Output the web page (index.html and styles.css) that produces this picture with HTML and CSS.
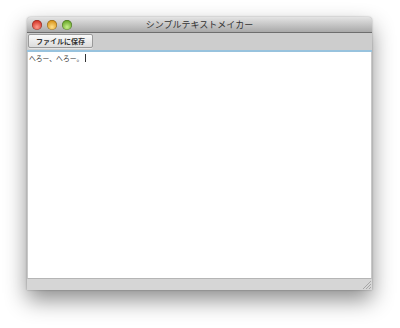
FILE: index.html
```html
<!DOCTYPE html>
<html lang="ja">
<head>
<meta charset="utf-8">
<title>シンプルテキストメイカー</title>
<link rel="stylesheet" href="styles.css">
</head>
<body>
<div class="window">
  <div class="titlebar">
    <div class="lights">
      <span class="light red"></span>
      <span class="light yellow"></span>
      <span class="light green"></span>
    </div>
    <div class="title">シンプルテキストメイカー</div>
  </div>
  <div class="toolbar">
    <button class="btn">ファイルに保存</button>
  </div>
  <div class="content">
    <div class="text">へろー、へろー。<span class="caret"></span></div>
  </div>
  <div class="statusbar">
    <svg class="grip" width="9" height="9" viewBox="0 0 9 9">
      <line x1="9" y1="1" x2="1" y2="9" stroke="#9a9a9a" stroke-width="0.8"/>
      <line x1="9" y1="4" x2="4" y2="9" stroke="#9a9a9a" stroke-width="0.8"/>
      <line x1="9" y1="7" x2="7" y2="9" stroke="#9a9a9a" stroke-width="0.8"/>
    </svg>
  </div>
</div>
</body>
</html>
```
FILE: styles.css
```css
html, body {
  margin: 0;
  padding: 0;
  background: #ffffff;
}
body {
  width: 400px;
  height: 328px;
  overflow: hidden;
  font-family: "Noto Sans CJK JP", "Noto Sans", sans-serif;
}
.window {
  margin: 17px 0 0 27px;
  width: 345px;
  height: 273px;
  display: flex;
  flex-direction: column;
  box-shadow: 0 10px 22px rgba(0,0,0,0.45), 0 0 2px rgba(0,0,0,0.35);
  border-radius: 4px 4px 0 0;
  background: #cfcfcf;
}
.titlebar {
  height: 15px;
  border-bottom: 1px solid #6e6e6e;
  background: linear-gradient(#e4e4e4, #a9a9a9);
  border-radius: 4px 4px 0 0;
  display: flex;
  align-items: center;
  position: relative;
}
.lights {
  display: flex;
  gap: 5px;
  padding-left: 5px;
}
.light {
  width: 10px;
  height: 10px;
  border-radius: 50%;
  box-shadow: inset 0 0 0 0.5px rgba(0,0,0,0.4);
}
.red { background: radial-gradient(circle at 50% 70%, #ff9c8c, #d4372a 70%); }
.yellow { background: radial-gradient(circle at 50% 70%, #ffe08a, #d9951c 70%); }
.green { background: radial-gradient(circle at 50% 70%, #c8f08a, #6aa82c 70%); }
.title {
  position: absolute;
  left: 0;
  right: 0;
  top: 0;
  bottom: 0;
  text-align: center;
  font-size: 9px;
  line-height: 15px;
  color: #333;
}
.toolbar {
  height: 17px;
  background: #cdcdcd;
  border-bottom: 2px solid #98c3de;
  display: flex;
  align-items: flex-start;
  padding-left: 1px;
}
.btn {
  margin: 1px 0 0 0;
  width: 65px;
  height: 14px;
  padding: 0;
  border: 1px solid #9a9a9a;
  border-radius: 2px;
  background: linear-gradient(#fafafa, #dcdcdc);
  box-shadow: 0 1px 0 rgba(255,255,255,0.5);
  font-family: "Noto Sans CJK JP", sans-serif;
  font-weight: bold;
  font-size: 7px;
  line-height: 12px;
  color: #333;
}
.content {
  flex: 1;
  background: #ffffff;
  border-left: 1px solid #c8c8c8;
  border-right: 1px solid #c8c8c8;
  border-bottom: 1px solid #b5b5b5;
}
.text {
  padding: 1px 0 0 1px;
  font-size: 6.8px;
  line-height: 10px;
  color: #333;
}
.caret {
  display: inline-block;
  width: 1px;
  height: 8px;
  background: #333;
  margin-left: 2px;
  vertical-align: -1px;
}
.statusbar {
  height: 11px;
  background: #d6d6d6;
  display: flex;
  justify-content: flex-end;
  align-items: flex-end;
}
.grip {
  display: block;
  margin: 0 1px 1px 0;
}
```
